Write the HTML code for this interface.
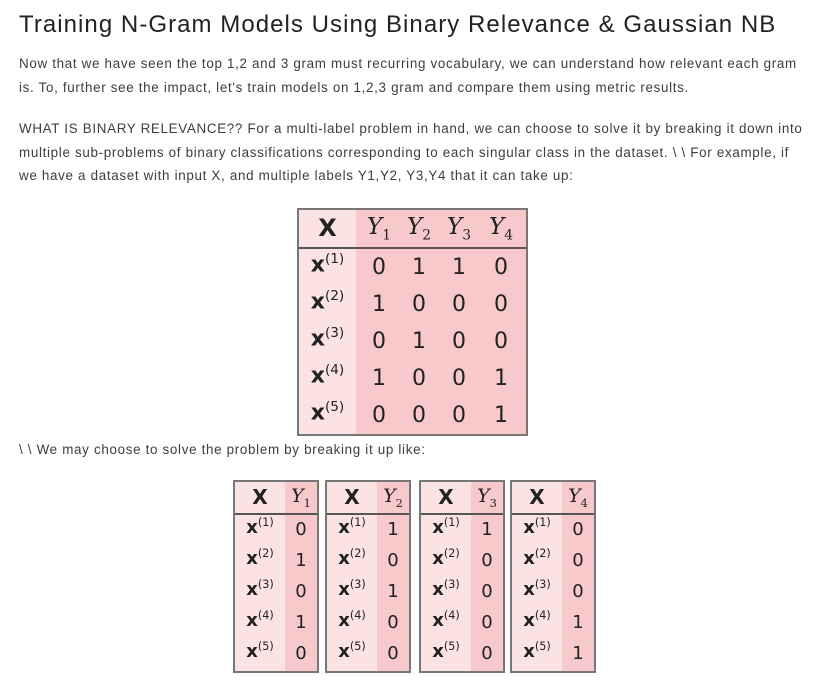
<!DOCTYPE html>
<html><head><style>
body{margin:0;width:819px;height:694px;background:#fff;font-family:"Liberation Sans",sans-serif;position:relative;overflow:hidden}
h1{position:absolute;left:19px;top:11px;margin:0;font-size:24px;letter-spacing:1.05px;font-weight:normal;color:#222;white-space:nowrap}
p{position:absolute;left:19px;margin:0;font-size:13.4px;letter-spacing:0.68px;line-height:23.5px;color:#3d3d3d;white-space:nowrap}
.t{position:absolute;border:2px solid #777;background:#f7c9ca;box-sizing:border-box}
.t .l{position:absolute;left:0;top:0;bottom:0;background:#fbe3e4}
.t .hl{position:absolute;left:0;right:0;height:2px;background:#555}
.c{position:absolute;text-align:center;font-family:"DejaVu Sans",sans-serif;color:#222}
.h{font-weight:bold}
.y{font-family:"DejaVu Serif",serif;font-style:italic}
.y sub{font-style:normal;font-size:60%}
.x{font-weight:bold}
.x sup{font-weight:normal;font-size:62%}
</style></head><body>
<h1>Training N-Gram Models Using Binary Relevance &amp; Gaussian NB</h1>
<p style="top:52px">Now that we have seen the top 1,2 and 3 gram must recurring vocabulary, we can understand how relevant each gram<br>is. To, further see the impact, let's train models on 1,2,3 gram and compare them using metric results.</p>
<p style="top:117px">WHAT IS BINARY RELEVANCE?? For a multi-label problem in hand, we can choose to solve it by breaking it down into<br>multiple sub-problems of binary classifications corresponding to each singular class in the dataset. \ \ For example, if<br>we have a dataset with input X, and multiple labels Y1,Y2, Y3,Y4 that it can take up:</p>
<p style="top:438px">\ \ We may choose to solve the problem by breaking it up like:</p>

<div class="t" style="left:297px;top:208px;width:231px;height:228px">
<div class="l" style="width:57px"></div>
<div class="hl" style="top:37px"></div>
<div class="c h" style="left:0;width:57px;top:4px;font-size:24px">X</div>
<div class="c y" style="left:60px;width:40px;top:4px;font-size:23px">Y<sub>1</sub></div>
<div class="c y" style="left:100px;width:40px;top:4px;font-size:23px">Y<sub>2</sub></div>
<div class="c y" style="left:140px;width:40px;top:4px;font-size:23px">Y<sub>3</sub></div>
<div class="c y" style="left:180px;width:44px;top:4px;font-size:23px">Y<sub>4</sub></div>
<div id="rows1"></div>
</div>

<div id="small"></div>
<script>
var data=[[0,1,1,0],[1,0,0,0],[0,1,0,0],[1,0,0,1],[0,0,0,1]];
var r=document.getElementById('rows1'),h='';
for(var i=0;i<5;i++){var t=45+i*37;
h+='<div class="c x" style="left:0;width:57px;top:'+(t-4)+'px;font-size:22px">x<sup>('+(i+1)+')</sup></div>';
for(var j=0;j<4;j++)h+='<div class="c" style="left:'+(60+j*40)+'px;width:'+(j==3?44:40)+'px;top:'+t+'px;font-size:22px">'+data[i][j]+'</div>';}
r.innerHTML=h;
var L=[233,325,419,510],s='';
for(var k=0;k<4;k++){
s+='<div class="t" style="left:'+L[k]+'px;top:480px;width:86px;height:193px"><div class="l" style="width:50px"></div><div class="hl" style="top:31px"></div>';
s+='<div class="c h" style="left:0;width:50px;top:3px;font-size:20px">X</div><div class="c y" style="left:50px;width:32px;top:3px;font-size:19px">Y<sub>'+(k+1)+'</sub></div>';
for(var i=0;i<5;i++){var t=37+i*31;
s+='<div class="c x" style="left:0;width:50px;top:'+(t-3)+'px;font-size:18px">x<sup>('+(i+1)+')</sup></div><div class="c" style="left:50px;width:32px;top:'+t+'px;font-size:18px">'+data[i][k]+'</div>';}
s+='</div>';}
document.getElementById('small').innerHTML=s;
</script>
</body></html>
